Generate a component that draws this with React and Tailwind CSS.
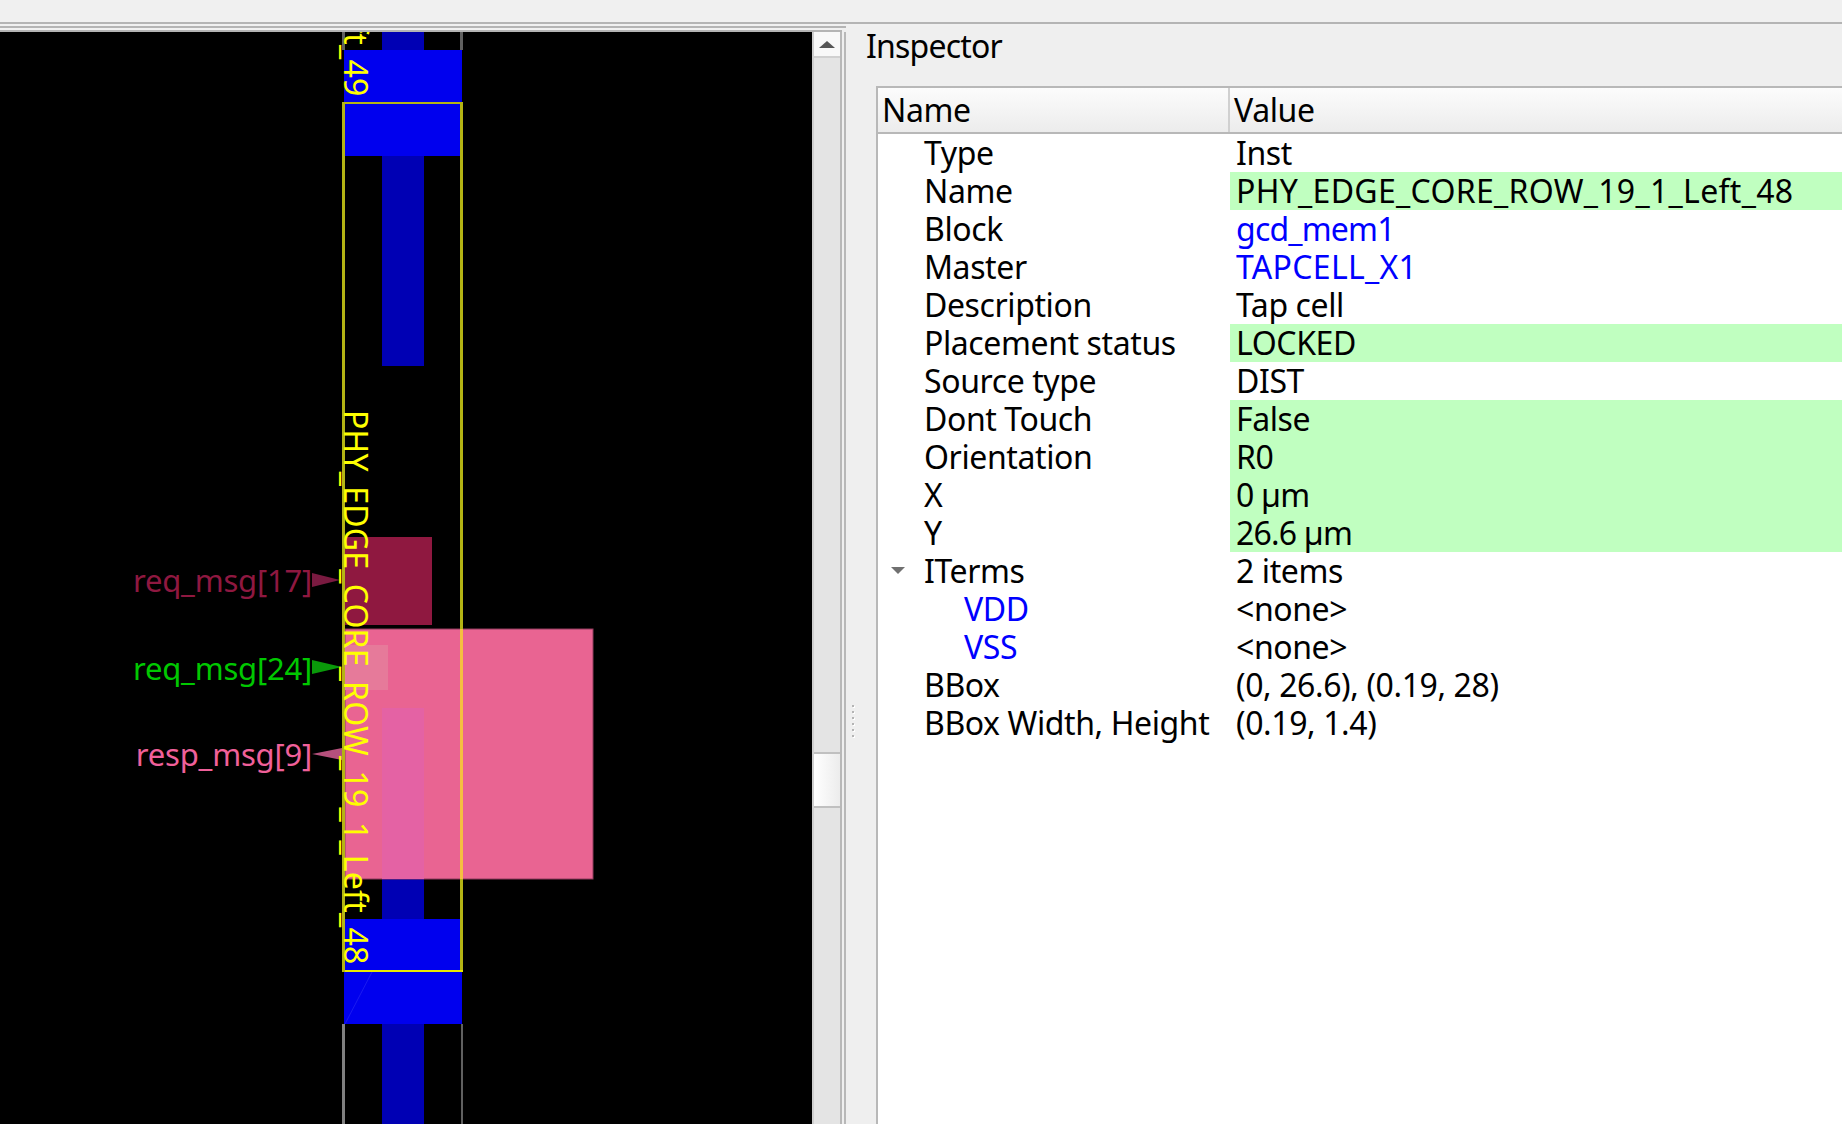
import React from "react";

const fontClass = "font-['Noto_Sans','Open_Sans',sans-serif]";

const rows = [
  { name: "Type", value: "Inst" },
  { name: "Name", value: "PHY_EDGE_CORE_ROW_19_1_Left_48", edit: true, caps: true },
  { name: "Block", value: "gcd_mem1", link: true, tight: true },
  { name: "Master", value: "TAPCELL_X1", link: true, caps: true },
  { name: "Description", value: "Tap cell" },
  { name: "Placement status", value: "LOCKED", edit: true },
  { name: "Source type", value: "DIST" },
  { name: "Dont Touch", value: "False", edit: true },
  { name: "Orientation", value: "R0", edit: true },
  { name: "X", value: "0 µm", edit: true, tight: true },
  { name: "Y", value: "26.6 µm", edit: true, tight: true },
  { name: "ITerms", value: "2 items", open: true },
  { name: "VDD", value: "<none>", child: true },
  { name: "VSS", value: "<none>", child: true },
  { name: "BBox", value: "(0, 26.6), (0.19, 28)" },
  { name: "BBox Width, Height", value: "(0.19, 1.4)" },
];

// layout view: everything in here is a drawing on a free canvas
function LayoutCanvas() {
  return (
    <div className="w-[812px] h-full bg-black overflow-hidden">
      <svg width="812" height="1092" className="block">
        {/* metal stripes */}
        <rect x="382" y="0" width="42" height="18" fill="#0000b4" />
        <rect x="382" y="124" width="42" height="210" fill="#0000b4" />
        <rect x="382" y="847" width="42" height="40" fill="#0000b4" />
        <rect x="382" y="992" width="42" height="100" fill="#0000b4" />
        <rect x="342" y="0" width="3" height="18" fill="#606060" />
        <rect x="460" y="0" width="3" height="18" fill="#606060" />
        <rect x="342" y="992" width="3" height="100" fill="#808080" />
        <rect x="461" y="992" width="2" height="100" fill="#606060" />
        <rect x="344" y="18" width="118" height="52" fill="#0000ee" />
        <rect x="345" y="72" width="115" height="52" fill="#0000ee" />
        <rect x="344" y="887" width="118" height="105" fill="#0000ee" />

        {/* pin shapes */}
        <rect x="345" y="505" width="87" height="88" fill="#8f1840" />
        <rect x="345" y="597" width="248" height="250" fill="#e96492" stroke="#8f3a5c" strokeWidth="1" />
        <rect x="345" y="613" width="43" height="45" fill="#e67a9a" />
        <rect x="382" y="676" width="42" height="171" fill="#e462a4" />

        {/* instance box */}
        <rect x="342" y="70" width="121" height="2" fill="#b4b414" />
        <rect x="342" y="70" width="3" height="870" fill="#b4b414" />
        <rect x="460" y="70" width="3" height="870" fill="#b4b414" />
        <rect x="460" y="597" width="3" height="250" fill="#f5c040" />
        <rect x="345" y="938" width="118" height="2" fill="#e8e800" />
        <line x1="345" y1="992" x2="372" y2="940" stroke="#1a1af0" strokeWidth="1" />

        {/* pins */}
        <polygon points="312,541 340,548 312,555" fill="#7a1a40" />
        <polygon points="312,628 342,635 312,642" fill="#0a9a0a" />
        <polygon points="312,722 342,716 342,728" fill="#b5507c" />
        <text x="312" y="560" textAnchor="end" fontSize="31" letterSpacing="-0.2" fill="#8f1840">req_msg[17]</text>
        <text x="312" y="648" textAnchor="end" fontSize="31" letterSpacing="-0.2" fill="#00c800">req_msg[24]</text>
        <text x="312" y="734" textAnchor="end" fontSize="31" letterSpacing="-0.2" fill="#f0609a">resp_msg[9]</text>

        {/* instance names, rotated */}
        <text transform="translate(344 -490) rotate(90)" fontSize="32" letterSpacing="0.2" fill="#ffff00">PHY_EDGE_CORE_ROW_19_1_Left_49</text>
        <text transform="translate(344 378) rotate(90)" fontSize="32" letterSpacing="0.2" fill="#ffff00">PHY_EDGE_CORE_ROW_19_1_Left_48</text>
      </svg>
    </div>
  );
}

function Scrollbar() {
  return (
    <div className="flex flex-col w-[30px] h-full bg-[#e4e4e4] border-l-2 border-r-2 border-l-[#cfcfcf] border-r-[#b8b8b8]">
      <div className="flex items-center justify-center h-[26px] bg-[#f8f8f8] border-b-2 border-[#d0d0d0]">
        <div className="w-0 h-0 border-l-[8px] border-r-[8px] border-b-[7px] border-l-transparent border-r-transparent border-b-[#555555]" />
      </div>
      <div className="h-[694px]" />
      <div className="h-[56px] border-y-2 border-[#c0c0c0] bg-gradient-to-r from-white to-[#ececec]" />
    </div>
  );
}

function SplitterDots() {
  return (
    <div className="flex flex-col gap-1 w-[30px] pt-[619px] pl-[6px]">
      {[0, 1, 2, 3, 4, 5].map((i) => (
        <div key={i} className="w-[2px] h-[2px] bg-[#b4b4b4] shadow-[1px_1px_0_#ffffff]" />
      ))}
    </div>
  );
}

function PropertyTree() {
  return (
    <div className="flex-1 bg-white border-l-2 border-t-2 border-[#b8b8b8]">
      <div className="flex h-[46px] items-center border-b-2 border-[#b8b8b8] bg-gradient-to-b from-[#fcfcfc] to-[#ececec]">
        <div className="w-[352px] h-full pl-1 flex items-center border-r-2 border-[#d0d0d0]">Name</div>
        <div className="pl-1">Value</div>
      </div>
      {rows.map((row) => (
        <div key={row.name} className="flex h-[38px] leading-[38px]">
          <div className={`relative w-[352px] ${row.child ? "pl-[86px] text-[#0000ff]" : "pl-[46px]"}`}>
            {row.open && (
              <div className="absolute left-[13px] top-[15px] w-0 h-0 border-l-[7px] border-r-[7px] border-t-[7px] border-l-transparent border-r-transparent border-t-[#707070]" />
            )}
            {row.name}
          </div>
          <div className={`flex-1 pl-1.5 ${row.edit ? "bg-[#c0ffc0]" : ""} ${row.link ? "text-[#0000ff]" : ""} ${row.caps ? "tracking-[0.3px]" : ""} ${row.tight ? "tracking-[-0.8px]" : ""}`}>
            {row.value}
          </div>
        </div>
      ))}
    </div>
  );
}

function Inspector() {
  return (
    <div className="flex flex-col flex-1 h-full min-w-0 ml-[2px] border-l-2 border-[#b8b8b8]">
      <div className="h-[54px] pl-5 pb-[26px] flex items-center tracking-[-0.8px]">Inspector</div>
      <div className="flex flex-1 min-h-0">
        <SplitterDots />
        <PropertyTree />
      </div>
    </div>
  );
}

export default function App() {
  return (
    <div className={`flex flex-col w-[1842px] h-[1124px] overflow-hidden bg-[#efefef] text-black text-[32px] tracking-[-0.4px] ${fontClass}`}>
      <div className="h-[32px] flex flex-col">
        <div className="h-[22px] bg-[#f0f0f0]" />
        <div className="h-[2px] bg-[#b4b4b4]" />
        <div className="h-[2px] bg-[#f0f0f0]" />
        <div className="h-[2px] w-[846px] bg-[#b4b4b4]" />
        <div className="h-[2px] w-[842px] bg-[#f0f0f0]" />
        <div className="h-[2px] w-[842px] bg-[#b4b4b4]" />
      </div>
      <div className="flex flex-1 min-h-0">
        <LayoutCanvas />
        <Scrollbar />
        <Inspector />
      </div>
    </div>
  );
}
